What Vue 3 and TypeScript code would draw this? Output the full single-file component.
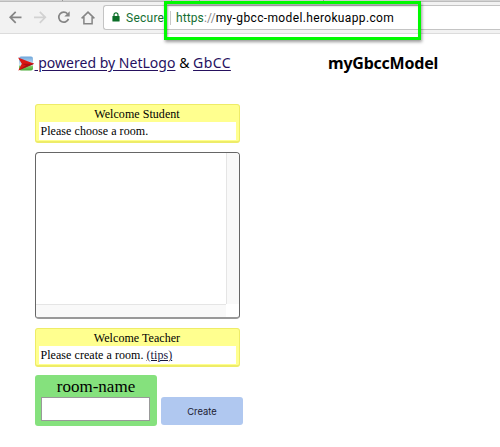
<script setup lang="ts">
import { ref } from 'vue'

interface Notice {
  title: string
  message: string
  link?: string
}

const student: Notice = { title: 'Welcome Student', message: 'Please choose a room.' }
const teacher: Notice = { title: 'Welcome Teacher', message: 'Please create a room.', link: '(tips)' }
const roomName = ref('')
</script>

<template>
  <div class="page">
    <div class="tabs"><i></i><i></i><i></i><i></i></div>
    <header class="toolbar">
      <svg class="nav" width="103" height="32" viewBox="0 0 103 32" fill="none" stroke-width="1.7">
        <path d="M21.5 15.3H10.5M15.7 9.8L10.2 15.3L15.7 20.8" stroke="#858585" />
        <path d="M34 15.3H45M39.8 9.8L45.3 15.3L39.8 20.8" stroke="#d2d2d2" />
        <path d="M67.5 11.8A5 5 0 1 0 68.5 16.9" stroke="#858585" />
        <path d="M69.7 9.3V14.6H64.3Z" fill="#858585" />
        <path d="M81.6 16.4L88 10.1L94.4 16.4M83.9 15V21.7H92.1V15" stroke="#858585" stroke-width="1.5" />
      </svg>
      <div class="address">
        <svg class="lock" width="8" height="10" viewBox="0 0 8 10">
          <path d="M2 4.5V2.8A2 2 0 0 1 6 2.8V4.5" fill="none" stroke="#0b6e28" stroke-width="1.2" />
          <rect x="0.4" y="4" width="7.2" height="5.6" rx=".6" fill="#0b6e28" />
        </svg>
        <span class="secure">Secure</span>
        <span class="divider"></span>
        <span class="url"><b>https</b><i>://</i>my-gbcc-model.herokuapp.com</span>
      </div>
      <div class="highlight"></div>
    </header>

    <div class="heading">
      <svg class="logo" width="17" height="16" viewBox="0 0 17 16">
        <defs>
          <linearGradient id="sky" x2="0" y2="1">
            <stop offset="0" stop-color="#6ca5db" />
            <stop offset=".62" stop-color="#d6e9f5" />
            <stop offset=".68" stop-color="#86cf68" />
            <stop offset="1" stop-color="#48aa35" />
          </linearGradient>
        </defs>
        <rect x="1" y="0.5" width="14" height="14" rx="2" fill="url(#sky)" />
        <path d="M0 1.4L16.2 7.7L0.3 14.4L3.8 7.7Z" fill="#dc1712" />
        <path d="M3.8 7.7L16.2 7.7L0.3 14.4L8 9.4Z" fill="#a90e14" />
      </svg>
      <span class="credits"><a class="netlogo">&nbsp;powered by NetLogo</a> &amp; <a class="gbcc">GbCC</a></span>
      <h1>myGbccModel</h1>
    </div>

    <main class="panel">
      <section class="notice">
        <h2>{{ student.title }}</h2>
        <p>{{ student.message }}</p>
      </section>
      <div class="rooms">
        <div class="list"></div>
        <div class="track"></div>
        <div class="track bottom"></div>
        <div></div>
      </div>
      <section class="notice">
        <h2>{{ teacher.title }}</h2>
        <p>{{ teacher.message }} <a>{{ teacher.link }}</a></p>
      </section>
      <form class="create" @submit.prevent>
        <label class="field">
          <span>room-name</span>
          <input v-model="roomName" type="text" />
        </label>
        <button>Create</button>
      </form>
    </main>
  </div>
</template>

<style>
body {
  margin: 0;
  background: #fff;
}
</style>

<style scoped>
.page {
  height: 447px;
  overflow: hidden;
  background: #fff;
  color: #000;
}
.tabs {
  box-sizing: border-box;
  display: grid;
  grid-template-columns: 109px 28px 124px 126px;
  height: 2px;
  padding-left: 62px;
  background: #d4d4d4;
  border-bottom: 1px solid #bcbcbc;
}
.tabs i {
  width: 1px;
  background: #999;
}
.toolbar {
  position: relative;
  box-sizing: border-box;
  display: flex;
  height: 32px;
  background: #f2f2f2;
  border-bottom: 1px solid #dcdcdc;
}
.nav {
  flex: none;
}
.address {
  box-sizing: border-box;
  display: flex;
  align-items: center;
  flex: 1;
  height: 25px;
  margin-top: 3px;
  padding-left: 8px;
  background: #fff;
  border: 1px solid #c4c4c4;
  border-right: 0;
  border-radius: 3px 0 0 3px;
  font: 12px/22px Roboto, sans-serif;
  white-space: nowrap;
}
.lock {
  margin-top: -2px;
}
.secure {
  width: 44px;
  margin-left: 6px;
  color: #146e32;
  letter-spacing: .25px;
}
.divider {
  width: 1px;
  height: 14px;
  margin-right: 5px;
  background: #c8c8c8;
}
.url {
  letter-spacing: .36px;
}
.url b {
  font-weight: 400;
  letter-spacing: .1px;
  color: #146e32;
}
.url i {
  font-style: normal;
  letter-spacing: .1px;
  color: #888;
}
.highlight {
  position: absolute;
  left: 164px;
  top: -1px;
  box-sizing: border-box;
  width: 257px;
  height: 39px;
  border: 3px solid #00fa00;
  box-shadow: 1px 2px 3px rgba(0, 0, 0, .4), inset 1px 2px 2px rgba(0, 0, 0, .3);
}
.heading {
  display: flex;
  align-items: center;
  height: 24px;
  padding: 16px 0 0 18px;
  font-family: "Noto Sans", sans-serif;
  font-size: 14px;
  white-space: nowrap;
}
.logo {
  margin: 4px 0 0 -.5px;
}
.credits {
  width: 293.5px;
  letter-spacing: .02px;
}
.credits a {
  color: #26115f;
  text-decoration: underline;
  text-underline-offset: 2px;
}
.credits .gbcc {
  letter-spacing: .4px;
}
h1 {
  margin: 2px 0 0;
  font-size: 16px;
  line-height: 24px;
  letter-spacing: -.22px;
}
.panel {
  width: 205px;
  margin: 30px 0 0 35px;
  font-family: "Liberation Serif", serif;
}
.notice {
  box-sizing: border-box;
  height: 39px;
  padding: 0 3px 2px;
  background: #ffff8f;
  border: 1px solid #eeec68;
  border-bottom-width: 2px;
  border-radius: 3px;
  font-size: 12px;
}
.notice h2 {
  height: 17px;
  margin: 0 1px 0 0;
  font-size: 12px;
  font-weight: 400;
  line-height: 18px;
  letter-spacing: .05px;
  text-align: center;
}
.notice p {
  margin: 0;
  height: 18px;
  padding-left: 1.5px;
  background: #fff;
  line-height: 18px;
  letter-spacing: .05px;
}
.notice a {
  color: #15153c;
  text-decoration: underline;
}
.rooms {
  box-sizing: border-box;
  display: grid;
  grid-template: 1fr 13px / 1fr 13px;
  height: 167px;
  margin: 9px 0;
  border: 1px solid #666;
  border-bottom: 2px solid #999;
  border-radius: 4px;
  overflow: hidden;
}
.track {
  background: #f9f9f9;
  border-left: 1px solid #e5e5e5;
}
.track.bottom {
  border-left: 0;
  border-top: 1px solid #e5e5e5;
}
.create {
  display: flex;
  align-items: flex-end;
  gap: 4px;
  margin-top: 8px;
  width: 209px;
}
.field {
  box-sizing: border-box;
  display: block;
  width: 122px;
  height: 51px;
  padding: 0 6px;
  background: #85e17d;
  border-radius: 3px;
  font-size: 17px;
  text-align: center;
}
.field span {
  display: block;
  height: 22px;
  line-height: 23px;
}
.field input {
  box-sizing: border-box;
  display: block;
  width: 109px;
  height: 24px;
  padding: 2px;
  border: 1px solid #999;
  border-radius: 0;
  background: #fff;
}
button {
  width: 82px;
  height: 28px;
  padding: 1px 0 0;
  margin-bottom: 1px;
  border: 0;
  border-radius: 3px;
  background: #b0c8f0;
  color: #202030;
  font: 9.4px Inter, sans-serif;
}
</style>
